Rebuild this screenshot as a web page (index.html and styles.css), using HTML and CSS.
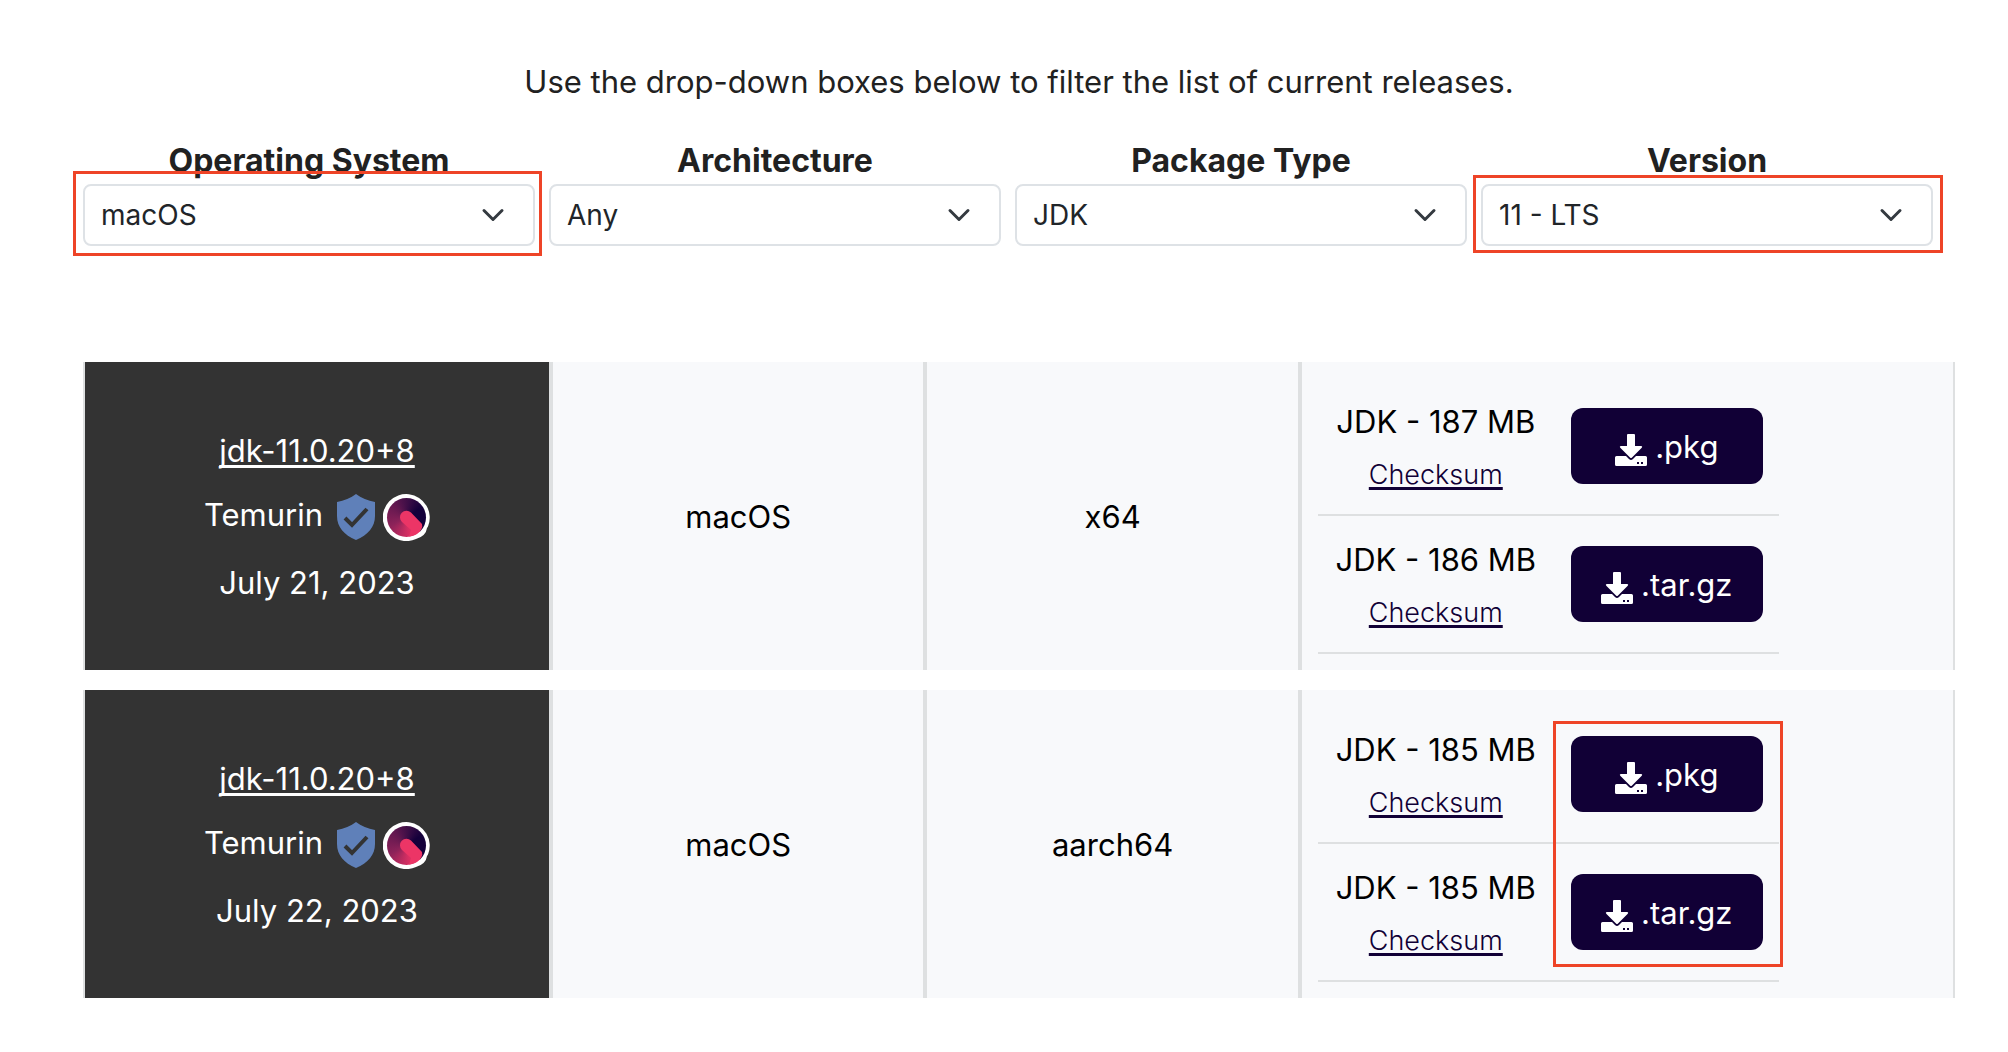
FILE: index.html
```html
<!DOCTYPE html>
<html lang="en">
<head>
<meta charset="utf-8">
<meta name="viewport" content="width=device-width, initial-scale=1">
<title>Temurin Releases</title>
<link rel="stylesheet" href="styles.css">
</head>
<body>
<svg class="sprite" aria-hidden="true">
  <symbol id="chevron" viewBox="0 0 16 16">
    <path d="m2 5 6 6 6-6" fill="none" stroke="#343a40" stroke-width="2" stroke-linecap="round" stroke-linejoin="round"/>
  </symbol>
  <symbol id="shield" viewBox="0 0 38 46">
    <path d="M19 0C24 4 31 6.500 38 8V22C38 33 31 41 19 46C7 41 0 33 0 22V8C7 6.500 14 4 19 0Z" fill="#5f80b9"/>
    <path d="M8 24l7 7L30 15" fill="none" stroke="#333" stroke-width="4"/>
  </symbol>
  <symbol id="logo" viewBox="0 0 47 47">
    <path d="M45 32.500A23.500 23.500 0 1 0 33 45Q43 42 44 34Z" fill="#fff"/>
  </symbol>
  <symbol id="logo-hand" viewBox="0 0 47 47">
    <path d="M19 28A6.500 6.500 0 0 1 28 18.500L39 30Q40 33 38 36A19 19 0 0 1 26 42.500L28 36Z" fill="#ec3566"/>
  </symbol>
  <symbol id="download" viewBox="0 0 32 32">
    <path d="M12 1Q12 0 13 0H19Q20 0 20 1V12H26Q28 12 26.500 14L17 23.500Q16 24.500 15 23.500L5.500 14Q4 12 6 12H12Z" fill="currentColor"/>
    <path fill-rule="evenodd" d="M1.500 22H11L14 25Q16 27 18 25L21 22H30.500Q32 22 32 23.500V30.500Q32 32 30.500 32H1.500Q0 32 0 30.500V23.500Q0 22 1.500 22ZM22 28V30H24V28ZM26 28V30H28V28Z" fill="currentColor"/>
  </symbol>
</svg>

<main class="page">
  <p class="intro">Use the drop-down boxes below to filter the list of current releases.</p>

  <form class="filters">
    <div class="filter">
      <label for="os">Operating System</label>
      <div class="select-wrap">
        <select id="os"><option>macOS</option></select>
        <svg class="chevron" aria-hidden="true"><use href="#chevron"/></svg>
        <span class="mark mark-os"></span>
      </div>
    </div>
    <div class="filter">
      <label for="arch">Architecture</label>
      <div class="select-wrap">
        <select id="arch"><option>Any</option></select>
        <svg class="chevron" aria-hidden="true"><use href="#chevron"/></svg>
      </div>
    </div>
    <div class="filter">
      <label for="package">Package Type</label>
      <div class="select-wrap">
        <select id="package"><option>JDK</option></select>
        <svg class="chevron" aria-hidden="true"><use href="#chevron"/></svg>
      </div>
    </div>
    <div class="filter">
      <label for="version">Version</label>
      <div class="select-wrap">
        <select id="version"><option>11 - LTS</option></select>
        <svg class="chevron" aria-hidden="true"><use href="#chevron"/></svg>
        <span class="mark mark-version"></span>
      </div>
    </div>
  </form>

  <table class="releases">
    <tbody>
      <tr>
        <th class="release" scope="row">
          <div class="release-info">
            <a href="#release-x64">jdk-11.0.20+8</a>
            <span class="vendor"><span class="vendor-name">Temurin</span><svg class="shield" aria-hidden="true"><use href="#shield"/></svg><span class="logo" aria-hidden="true"><svg><use href="#logo"/></svg><span class="logo-disc"></span><svg><use href="#logo-hand"/></svg></span></span>
            <span>July 21, 2023</span>
          </div>
        </th>
        <td class="os">macOS</td>
        <td class="arch">x64</td>
        <td class="files">
          <ul class="downloads">
            <li class="download">
              <div class="package"><span>JDK - 187 MB</span><a href="#checksum-1">Checksum</a></div>
              <button class="get" type="button"><svg aria-hidden="true"><use href="#download"/></svg>.pkg</button>
            </li>
            <li class="download">
              <div class="package"><span>JDK - 186 MB</span><a href="#checksum-2">Checksum</a></div>
              <button class="get" type="button"><svg aria-hidden="true"><use href="#download"/></svg>.tar.gz</button>
            </li>
          </ul>
        </td>
      </tr>
      <tr>
        <th class="release" scope="row">
          <div class="release-info">
            <a href="#release-aarch64">jdk-11.0.20+8</a>
            <span class="vendor"><span class="vendor-name">Temurin</span><svg class="shield" aria-hidden="true"><use href="#shield"/></svg><span class="logo" aria-hidden="true"><svg><use href="#logo"/></svg><span class="logo-disc"></span><svg><use href="#logo-hand"/></svg></span></span>
            <span>July 22, 2023</span>
          </div>
        </th>
        <td class="os">macOS</td>
        <td class="arch">aarch64</td>
        <td class="files">
          <ul class="downloads">
            <li class="download">
              <div class="package"><span>JDK - 185 MB</span><a href="#checksum-3">Checksum</a></div>
              <button class="get" type="button"><svg aria-hidden="true"><use href="#download"/></svg>.pkg</button>
            </li>
            <li class="download">
              <div class="package"><span>JDK - 185 MB</span><a href="#checksum-4">Checksum</a></div>
              <button class="get" type="button"><svg aria-hidden="true"><use href="#download"/></svg>.tar.gz</button>
            </li>
            <li class="mark mark-downloads" aria-hidden="true"></li>
          </ul>
        </td>
      </tr>
    </tbody>
  </table>
</main>
</body>
</html>
```
FILE: styles.css
```css
* {
  box-sizing: border-box;
}

body {
  margin: 0;
  background: #fff;
  color: #212121;
  font: 400 31px/48px Inter, "Liberation Sans", sans-serif;
}

.sprite {
  position: absolute;
  width: 0;
  height: 0;
}

.page {
  padding: 58px 53px 34px 83px;
}

.intro {
  margin: 0 0 32px;
  text-align: center;
}

/* Filters */
.filters {
  display: grid;
  grid-template-columns: repeat(4, 1fr);
  gap: 14px;
  margin-right: 22px;
}

.filter {
  text-align: center;
}

.filter label {
  display: block;
  font-size: 32px;
  font-weight: 700;
  line-height: 46px;
}

.select-wrap {
  position: relative;
}

.select-wrap select {
  display: block;
  width: 100%;
  height: 62px;
  padding: 0 64px 0 16px;
  border: 2px solid #dee2e6;
  border-radius: 8px;
  background: #fff;
  color: #212529;
  font: 400 28px/42px Inter, "Liberation Sans", sans-serif;
  appearance: none;
}

.chevron {
  position: absolute;
  top: 19px;
  right: 30px;
  width: 24px;
  height: 24px;
  pointer-events: none;
}

/* Red highlight frames laid over the controls */
.mark {
  position: absolute;
  border: 3px solid #ee4427;
  pointer-events: none;
}

.mark-os {
  inset: -13px -7px -10px -10px;
}

.mark-version {
  inset: -9px -10px -7px -8px;
}

.mark-downloads {
  top: 15px;
  right: -4px;
  bottom: 15px;
  width: 230px;
}

/* Release table */
.releases {
  width: 100%;
  margin-top: 96px;
  border-collapse: separate;
  border-spacing: 0 20px;
  table-layout: fixed;
  color: #000;
}

.releases th,
.releases td {
  padding: 16px;
  border: solid #dee0e1;
  border-width: 0 2px;
  background: #f8f9fb;
  font-weight: 400;
  text-align: center;
  vertical-align: middle;
}

.releases .release {
  width: 25%;
  background: #333;
  color: #fff;
}

.releases .os,
.releases .arch {
  width: 20%;
  padding-top: 18px;
}

a {
  color: inherit;
  text-decoration-thickness: 3px;
  text-underline-offset: 3px;
  text-decoration-skip-ink: none;
}

.release-info {
  display: flex;
  flex-direction: column;
  align-items: center;
  gap: 16px;
  padding-top: 2px;
}

.vendor {
  display: flex;
  align-items: center;
}

.vendor-name {
  padding-bottom: 4px;
}

.shield {
  width: 38px;
  height: 46px;
  margin: 0 8px 0 14px;
}

/* Ring, conic disc and hand are stacked in one grid cell */
.logo {
  display: grid;
  place-items: center;
  width: 47px;
  height: 47px;
}

.logo > * {
  grid-area: 1 / 1;
}

.logo svg {
  width: 47px;
  height: 47px;
}

.logo-disc {
  width: 39px;
  height: 39px;
  border-radius: 50%;
  background: conic-gradient(from 135deg, #ec3566 0%, #d83063 10%, #8c2259 30%, #641850 50%, #3a0d46 65%, #14003b 78%, #14003b 100%);
}

.downloads {
  position: relative;
  max-width: 461px;
  margin: 0;
  padding: 0;
  list-style: none;
}

.download {
  display: flex;
  align-items: center;
  justify-content: space-between;
  height: 138px;
  padding-right: 16px;
  border-bottom: 2px solid #dee0e1;
}

.package {
  display: flex;
  flex-direction: column;
  align-items: center;
  gap: 5px;
  width: 236px;
  padding-top: 4px;
}

.package a {
  color: #110036;
  font-size: 27px;
  font-weight: 300;
}

.get {
  display: flex;
  align-items: center;
  justify-content: center;
  gap: 8px;
  width: 192px;
  height: 76px;
  padding: 2px 0 0;
  border: 0;
  border-radius: 12px;
  background: #110036;
  color: #fff;
  font: inherit;
}

.get svg {
  width: 32px;
  height: 32px;
  margin-top: 6px;
}
```
